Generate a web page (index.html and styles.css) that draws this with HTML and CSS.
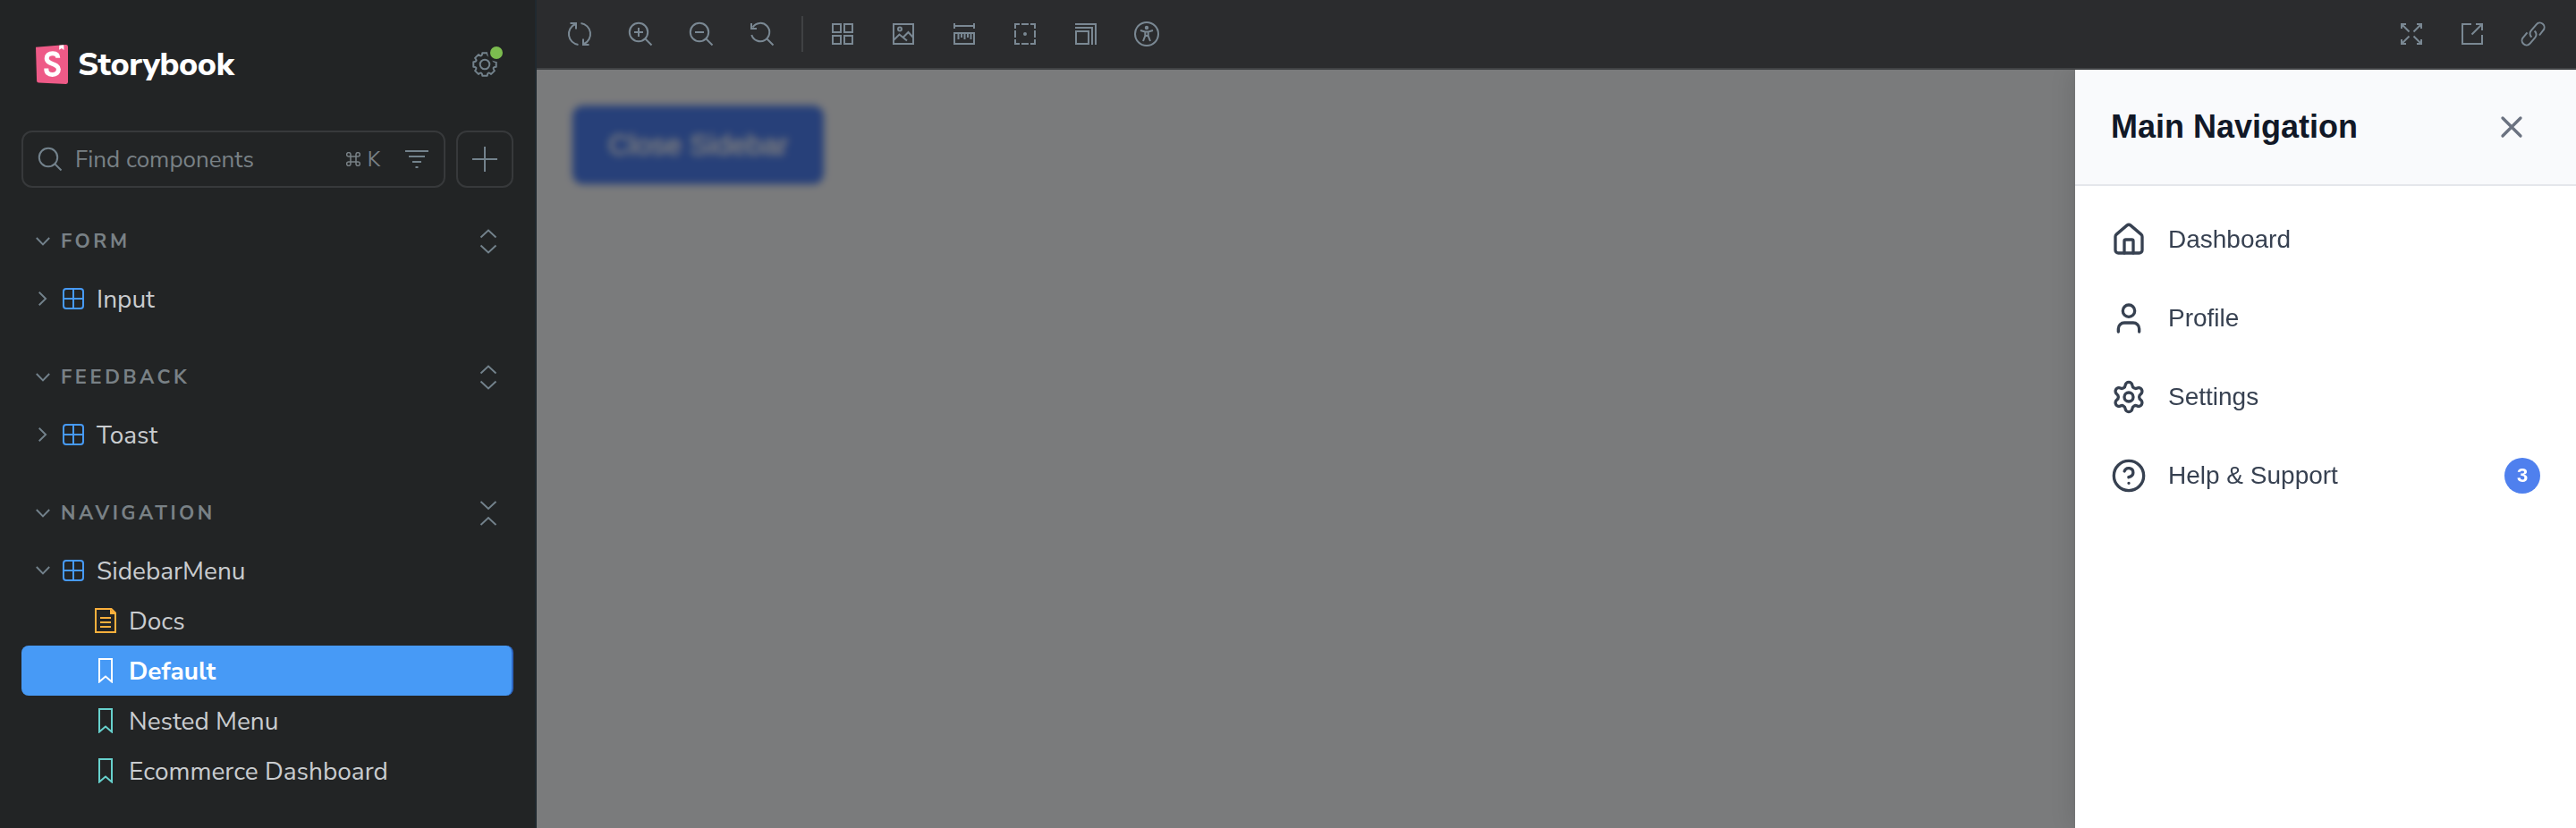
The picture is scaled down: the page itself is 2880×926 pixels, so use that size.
FILE: index.html
```html
<!DOCTYPE html>
<html lang="en">
<head>
<meta charset="utf-8">
<title>Storybook</title>
<link rel="stylesheet" href="styles.css">
</head>
<body>
<svg class="defs" aria-hidden="true">
  <symbol id="chev-down" viewBox="0 0 16 16"><path d="M.8 4l7.2 7.4L15.200 4" fill="none" stroke="currentColor" stroke-width="1.900"/></symbol>
  <symbol id="chev-right" viewBox="0 0 16 16"><path d="M3.700.8l7.400 7.200-7.400 7.200" fill="none" stroke="currentColor" stroke-width="1.900"/></symbol>
  <symbol id="expand" viewBox="0 0 28 28"><path d="M5.500 9.500L14 1.500l8.500 8M5.500 18.500l8.500 8 8.500-8" fill="none" stroke="currentColor" stroke-width="1.900"/></symbol>
  <symbol id="collapse" viewBox="0 0 28 28"><path d="M5.500 1l8.500 8 8.500-8M5.500 27l8.500-8 8.500 8" fill="none" stroke="currentColor" stroke-width="1.900"/></symbol>
  <symbol id="component" viewBox="0 0 28 28"><path d="M6 3h16a3 3 0 0 1 3 3v16a3 3 0 0 1-3 3H6a3 3 0 0 1-3-3V6a3 3 0 0 1 3-3zM14 3v22M3 14h22" fill="none" stroke="currentColor" stroke-width="2"/></symbol>
  <symbol id="doc" viewBox="0 0 28 28"><path d="M3 1h17.500L25 5.500V27H3z" fill="none" stroke="currentColor" stroke-width="2"/><path d="M19 1l7 6h-7zM8 10h12v2H8zM8 15h12v2H8zM8 20h12v2H8z" fill="currentColor"/></symbol>
  <symbol id="bookmark" viewBox="0 0 28 28"><path d="M7 1h14v25.500l-7-6-7 6z" fill="none" stroke="currentColor" stroke-width="2"/></symbol>
  <symbol id="glass" viewBox="0 0 28 28"><circle cx="12" cy="12" r="10.200"/><path d="M19.500 19.500l7 7"/></symbol>
</svg>
<div class="app">
  <aside class="sidebar">
    <header class="brand">
      <svg class="logo" viewBox="0 0 36 44"><path d="M0 2.800L33.500.1Q36 0 36 2.500v39.300Q36 44 33.700 43.900L3.200 42.500Q1.200 42.400 1.100 40.400z" fill="#ee5a87"/><path d="M26.300.7l5-.4.2 5.600-2.600-1.800-2.800 1.600z" fill="#fff"/><path d="M24.800 14.800c0-3.500-2.300-5-5.900-5-4.200 0-6.700 2-6.700 5.500 0 7.200 13.200 5.200 13.200 12.300 0 3.700-2.700 5.900-6.800 5.900-4.500 0-7-2.300-6.800-7" fill="none" stroke="#fff" stroke-width="5"/></svg>
      <span class="brand-name">Storybook</span>
      <button class="gear" aria-label="Settings">
        <svg viewBox="0 0 28 28"><mask id="cut"><path d="M-4-4h40v40H-4z" fill="#fff"/><circle cx="27" cy="1" r="10" fill="#000"/></mask><g mask="url(#cut)" fill="none" stroke="currentColor" stroke-width="2"><circle cx="14" cy="14" r="5.300"/><path d="M26.700 16.700Q21.400 17.100 24.900 21.100L21.100 24.900Q17.100 21.400 16.700 26.700L11.300 26.700Q10.900 21.400 6.900 24.900L3.100 21.100Q6.600 17.100 1.300 16.700L1.300 11.300Q6.600 10.900 3.100 6.900L6.900 3.100Q10.900 6.600 11.300 1.300L16.700 1.300Q17.100 6.600 21.100 3.100L24.900 6.900Q21.400 10.900 26.700 11.300z" stroke-linejoin="round"/></g></svg>
        <i class="dot"></i>
      </button>
    </header>
    <div class="search-row">
      <div class="search">
        <svg class="i28 thin" viewBox="0 0 28 28"><use href="#glass"/></svg>
        <span class="placeholder">Find components</span>
        <kbd><svg class="cmd" viewBox="0 0 16 16"><path d="M5 5h6v6H5zM5 5H3a2.200 2.200 0 1 1 2-2zM11 5V3a2.200 2.200 0 1 1 2 2zM11 11h2a2.200 2.200 0 1 1-2 2zM5 11v2a2.200 2.200 0 1 1-2-2z"/></svg><span>K</span></kbd>
        <svg class="i28 thin filter" viewBox="0 0 28 28"><path d="M1 5h26M5 11h18M9 17h10M12.500 23h3"/></svg>
      </div>
      <button class="add" aria-label="Add"><svg class="i28 thin" viewBox="0 0 28 28"><path d="M14 0v28M0 14h28"/></svg></button>
    </div>
    <nav class="tree">
      <section>
        <h2><svg class="chev"><use href="#chev-down"/></svg><span>FORM</span><svg class="i28 end"><use href="#expand"/></svg></h2>
        <a class="node"><svg class="chev"><use href="#chev-right"/></svg><svg class="i28 blue"><use href="#component"/></svg><span>Input</span></a>
      </section>
      <section>
        <h2><svg class="chev"><use href="#chev-down"/></svg><span>FEEDBACK</span><svg class="i28 end"><use href="#expand"/></svg></h2>
        <a class="node"><svg class="chev"><use href="#chev-right"/></svg><svg class="i28 blue"><use href="#component"/></svg><span>Toast</span></a>
      </section>
      <section>
        <h2><svg class="chev"><use href="#chev-down"/></svg><span>NAVIGATION</span><svg class="i28 end"><use href="#collapse"/></svg></h2>
        <a class="node"><svg class="chev"><use href="#chev-down"/></svg><svg class="i28 blue"><use href="#component"/></svg><span>SidebarMenu</span></a>
        <a class="node leaf"><svg class="i28 orange"><use href="#doc"/></svg><span>Docs</span></a>
        <a class="node leaf selected"><svg class="i28"><use href="#bookmark"/></svg><span>Default</span></a>
        <a class="node leaf"><svg class="i28 teal"><use href="#bookmark"/></svg><span>Nested Menu</span></a>
        <a class="node leaf"><svg class="i28 teal"><use href="#bookmark"/></svg><span>Ecommerce Dashboard</span></a>
      </section>
    </nav>
  </aside>
  <main class="main">
    <div class="toolbar">
      <svg class="i28 tool" viewBox="0 0 28 28"><path d="M12.500 26A12.100 12.100 0 0 1 9 3M15.500 2A12.100 12.100 0 0 1 19 25M3.500 2H10v6.500M24.500 26H18v-6.500"/></svg>
      <svg class="i28 tool" viewBox="0 0 28 28"><use href="#glass"/><path d="M12 7v10M7 12h10"/></svg>
      <svg class="i28 tool" viewBox="0 0 28 28"><use href="#glass"/><path d="M7 12h10"/></svg>
      <svg class="i28 tool" viewBox="0 0 28 28"><path d="M3.500 6.500A10.200 10.200 0 1 1 2.300 15M2 2v6h6M19.500 19.500l7 7"/></svg>
      <span class="sep"></span>
      <svg class="i28 tool" viewBox="0 0 28 28"><path d="M3 3h9v9H3zM16 3h9v9h-9zM3 16h9v9H3zM16 16h9v9h-9z"/></svg>
      <svg class="i28 tool" viewBox="0 0 28 28"><path d="M3 3h22v22H3zM3 21l6.500-6.500L18 21.500M13.500 18l6-6 5.500 6"/><circle cx="10" cy="8.500" r="2"/></svg>
      <svg class="i28 tool" viewBox="0 0 28 28"><path d="M3 2v6M25 2v6M3 5h22M3 13h22v12H3zM7.500 13v7M11 13v5M14.500 13v7M18 13v5M21.500 13v7"/></svg>
      <svg class="i28 tool" viewBox="0 0 28 28"><path d="M3 8V3h5M10 3h8M20 3h5v5M25 10v8M25 20v5h-5M18 25h-8M8 25H3v-5M3 18v-8"/><circle cx="14" cy="14" r="1"/></svg>
      <svg class="i28 tool" viewBox="0 0 28 28"><path d="M3 11h14v14H3zM2 7h19v19M2 3h23v23"/></svg>
      <svg class="i28 tool" viewBox="0 0 28 28"><circle cx="14" cy="14" r="13"/><circle cx="14" cy="7" r="1.200"/><path d="M7 10l5 1.500h4l5-1.500M12.300 11.500v4.500L10 22M15.700 11.500v4.500L18 22M12.500 16h3"/></svg>
      <svg class="i28 tool push" viewBox="0 0 28 28"><path d="M3 8V3h5M3 3l8.500 8.500M20 3h5v5M25 3l-8.500 8.500M3 20v5h5M3 25l8.500-8.500M25 20v5h-5M25 25l-8.500-8.500"/></svg>
      <svg class="i28 tool" viewBox="0 0 28 28"><path d="M13 3H3v22h22V15M18 3h7v7M25 3L13.500 14.500"/></svg>
      <svg class="i28 tool" viewBox="0 0 28 28"><path d="M12.500 17.500a5 5 0 0 1-.8-7.200l6-7A5 5 0 0 1 25.300 10L21 15.500M7.500 12.300L3 17.800a5 5 0 0 0 7.400 7l6-7a5 5 0 0 0-.8-7.200"/></svg>
    </div>
    <div class="canvas">
      <button class="cta">Close Sidebar</button>
      <div class="scrim"></div>
      <aside class="drawer">
        <header class="drawer-head"><h1>Main Navigation</h1><button class="close" aria-label="Close"><svg class="i40" viewBox="0 0 24 24"><path d="M18 6L6 18M6 6l12 12"/></svg></button></header>
        <nav class="menu">
          <a><svg class="i40" viewBox="0 0 24 24"><path d="M15 21v-8a1 1 0 0 0-1-1h-4a1 1 0 0 0-1 1v8"/><path d="M3 10a2 2 0 0 1 .709-1.528l7-5.999a2 2 0 0 1 2.582 0l7 5.999A2 2 0 0 1 21 10v9a2 2 0 0 1-2 2H5a2 2 0 0 1-2-2z"/></svg><span>Dashboard</span></a>
          <a><svg class="i40" viewBox="0 0 24 24"><path d="M19 21v-2a4 4 0 0 0-4-4H9a4 4 0 0 0-4 4v2"/><circle cx="12" cy="7" r="4"/></svg><span>Profile</span></a>
          <a><svg class="i40" viewBox="0 0 24 24"><path d="M9.671 4.136a2.340 2.340 0 0 1 4.659 0 2.340 2.340 0 0 0 3.319 1.915 2.340 2.340 0 0 1 2.330 4.033 2.340 2.340 0 0 0 0 3.831 2.340 2.340 0 0 1-2.330 4.033 2.340 2.340 0 0 0-3.319 1.915 2.340 2.340 0 0 1-4.659 0 2.340 2.340 0 0 0-3.320-1.915 2.340 2.340 0 0 1-2.330-4.033 2.340 2.340 0 0 0 0-3.831A2.340 2.340 0 0 1 6.350 6.051a2.340 2.340 0 0 0 3.319-1.915"/><circle cx="12" cy="12" r="3"/></svg><span>Settings</span></a>
          <a><svg class="i40" viewBox="0 0 24 24"><circle cx="12" cy="12" r="10"/><path d="M9.090 9a3 3 0 0 1 5.830 1c0 2-3 3-3 3M12 17h.01"/></svg><span>Help &amp; Support</span><b class="badge">3</b></a>
        </nav>
      </aside>
    </div>
  </main>
</div>
</body>
</html>
```
FILE: styles.css
```css
* { box-sizing: border-box; }
body { margin: 0; background: #222425; overflow: hidden; }
button { border: 0; padding: 0; background: none; font: inherit; color: inherit; }
.defs { position: absolute; width: 0; height: 0; }
.app { display: flex; width: 2880px; height: 926px; }

.i28 { width: 28px; height: 28px; flex: none; }
.i40 { width: 40px; height: 40px; flex: none; fill: none; stroke: currentColor; stroke-width: 2; stroke-linecap: round; stroke-linejoin: round; }
.chev { width: 16px; height: 16px; flex: none; color: #73828c; }
.thin { fill: none; stroke: #73828c; stroke-width: 2; }
.blue { color: #479af6; }
.orange { color: #fcb03c; }
.teal { color: #67d1cd; }

.sidebar { width: 600px; flex: none; padding: 40px 24px 0; background: #222425; border-right: 2px solid #20292f; font-family: "Nunito Sans", "Noto Sans", sans-serif; color: #c9cccf; }
.brand { display: flex; align-items: center; height: 64px; padding-left: 16px; }
.logo { width: 36px; height: 44px; }
.brand-name { margin-left: 11px; padding-top: 2px; font-size: 36px; line-height: 44px; font-weight: 800; color: #fff; letter-spacing: -0.4px; }
.gear { position: relative; width: 28px; height: 28px; margin-left: auto; margin-right: 18px; color: #73828c; }
.gear svg { display: block; width: 28px; height: 28px; overflow: visible; }
.dot { position: absolute; left: 20px; top: -6px; width: 14px; height: 14px; border-radius: 50%; background: #7cbc4f; }

.search-row { display: flex; gap: 12px; margin-top: 42px; width: 550px; }
.search { display: flex; align-items: center; width: 474px; height: 64px; padding: 0 16px; border: 2px solid #37393b; border-radius: 12px; }
.placeholder { margin-left: 14px; font-size: 26px; color: #798186; }
.search kbd { display: flex; align-items: center; gap: 8px; margin-left: auto; font: 23px "Nunito Sans", "Noto Sans", sans-serif; color: #798186; }
.cmd { width: 16px; height: 16px; fill: none; stroke: currentColor; stroke-width: 1.5; }
.filter { margin-left: 27px; }
.add { display: flex; align-items: center; justify-content: center; width: 64px; height: 64px; border: 2px solid #37393b; border-radius: 12px; }

.tree { width: 550px; margin-top: 32px; }
.tree section { margin-bottom: 32px; }
.tree h2 { display: flex; align-items: center; height: 56px; margin: 0 0 8px; padding: 0 14px 0 16px; font-size: 22px; font-weight: 700; letter-spacing: 3.5px; color: #798186; }
.tree h2 span { margin-left: 12px; }
.end { margin-left: auto; color: #73828c; }
.node { display: flex; align-items: center; height: 56px; padding-left: 16px; font-size: 28px; border-radius: 8px; }
.node .i28 { margin-left: 12px; }
.node span { margin-left: 12px; padding-top: 2px; white-space: nowrap; }
.leaf { padding-left: 68px; }
.selected { background: #479af6; color: #fff; font-weight: 700; border-right: 2px solid #2f67c2; }

.main { display: flex; flex-direction: column; flex: 1; min-width: 0; }
.toolbar { display: flex; align-items: center; gap: 40px; height: 78px; padding: 0 34px; background: #2b2c2e; border-bottom: 2px solid #404244; }
.tool { fill: none; stroke: #7a8893; stroke-width: 2; overflow: visible; }
.sep { width: 2px; height: 40px; margin: 0 -10px; background: #404244; }
.push { margin-left: auto; }

.canvas { position: relative; flex: 1; padding: 40px; overflow: hidden; background: #f5f6f8; font-family: "Liberation Sans", Arial, sans-serif; }
.cta { display: block; width: 281px; height: 88px; border-radius: 12px; background: #4e80f2; color: #fff; font-size: 32px; line-height: 88px; -webkit-text-stroke: 0.8px #fff; }
.scrim { position: absolute; inset: 0; background: rgba(0, 0, 0, 0.5); backdrop-filter: blur(4px); }
.drawer { position: absolute; top: 0; right: 0; bottom: 0; width: 560px; background: #fff; box-shadow: -4px 0 24px rgba(0, 0, 0, 0.1); }
.drawer-head { display: flex; align-items: center; justify-content: space-between; height: 130px; padding: 0 52px 0 40px; background: #f9fafc; border-bottom: 2px solid #e5e7eb; }
.drawer-head h1 { margin: 0; font-size: 36px; line-height: 44px; font-weight: 700; color: #111827; }
.close { height: 40px; color: #6b7280; }
.menu { padding: 16px 40px; }
.menu a { display: flex; align-items: center; height: 88px; gap: 24px; font-size: 28px; color: #374151; }
.badge { display: flex; align-items: center; justify-content: center; width: 40px; height: 40px; margin-left: auto; border-radius: 50%; background: #4f80ee; color: #fff; font-size: 22px; }
```
